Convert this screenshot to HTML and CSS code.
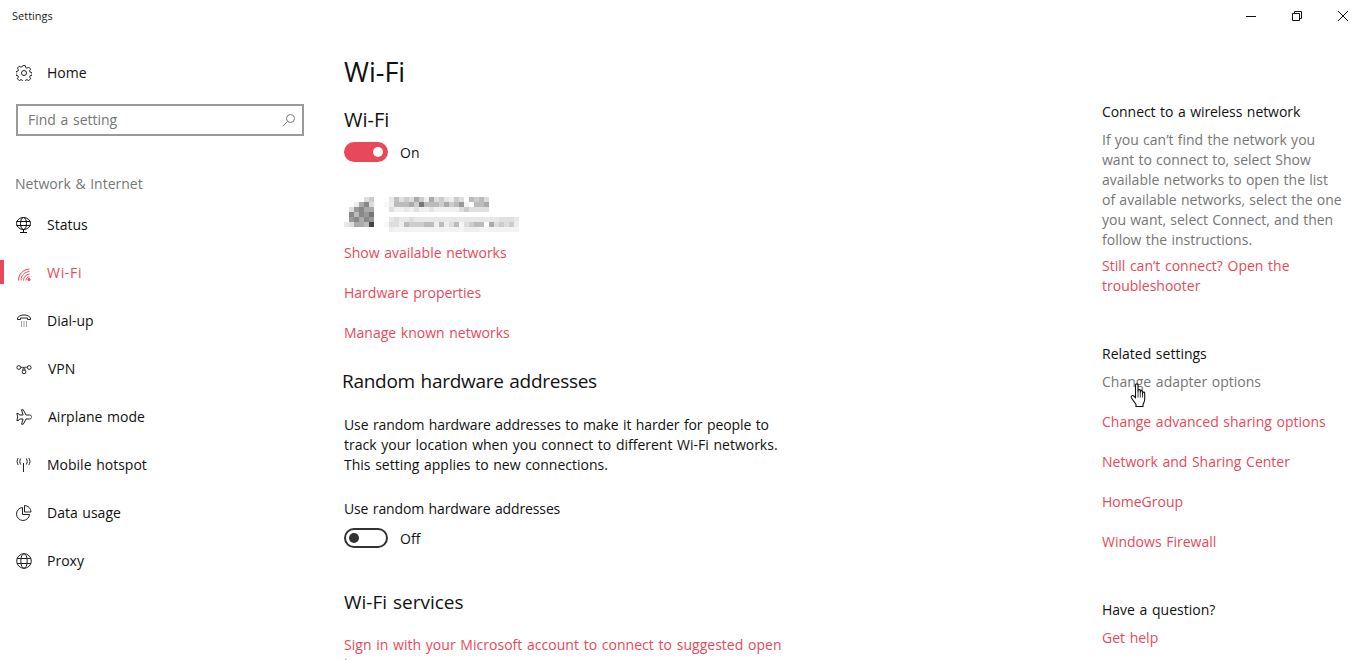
FILE: index.html
```html
<!DOCTYPE html>
<html lang="en">
<head>
<meta charset="utf-8">
<title>Settings</title>
<link rel="stylesheet" href="styles.css">
</head>
<body>
<div class="window">
  <header class="titlebar">
    <span class="app-name">Settings</span>
    <div class="controls">
      <span class="ctl"><svg width="10" height="10" viewBox="0 0 10 10"><path d="M0 5.500h10" stroke="#111" fill="none"/></svg></span>
      <span class="ctl"><svg width="10" height="10" viewBox="0 0 10 10"><path d="M.5 2.500h7v7h-7zM2.500 2.500v-2h7v7h-2" stroke="#111" fill="none"/></svg></span>
      <span class="ctl"><svg width="10" height="10" viewBox="0 0 10 10"><path d="M0 0l10 10M10 0L0 10" stroke="#111" fill="none"/></svg></span>
    </div>
  </header>
  <div class="columns">
    <nav class="sidebar">
      <a class="nav-item home">
        <svg class="ico" viewBox="0 0 16 16"><g fill="none" stroke="#222"><circle cx="8" cy="8" r="2.500"/><path d="M6.700.6h2.600l.4 2 1.300.6 1.800-1 1.800 1.900-1 1.700.5 1.300 2 .5v2.600l-2 .5-.5 1.300 1 1.700-1.800 1.900-1.800-1-1.300.6-.4 2H6.700l-.4-2-1.300-.6-1.800 1-1.800-1.900 1-1.700-.5-1.300-2-.5V6.600l2-.5.500-1.300-1-1.700 1.800-1.900 1.800 1 1.300-.6z"/></g></svg>
        <span>Home</span>
      </a>
      <div class="search">
        <span class="placeholder">Find a setting</span>
        <svg class="search-ico" width="14" height="14" viewBox="0 0 14 14"><circle cx="8.500" cy="5.500" r="4" fill="none" stroke="#777"/><path d="M5.600 8.400L.8 13.200" stroke="#777" fill="none"/></svg>
      </div>
      <div class="group-label">Network &amp; Internet</div>
      <a class="nav-item">
        <svg class="ico" viewBox="0 0 16 16"><g fill="none" stroke="#111"><ellipse cx="7.500" cy="6.500" rx="7" ry="6"/><ellipse cx="7.500" cy="6.500" rx="3" ry="6"/><path d="M.5 4.500h14M.5 8.500h14M7.500 12.500v3M4 15.500h7"/></g></svg>
        <span>Status</span>
      </a>
      <a class="nav-item active">
        <svg class="ico" viewBox="0 0 16 16"><g fill="none" stroke="#e8495a"><path d="M2.500 15.500C2.500 9 7 4.500 13.500 4M5 15.500c0-5 3.500-8.500 8.500-9M7.500 15.500c0-3.200 2.500-6 6-6.500M10 15.500c0-1.800 1.500-3.500 3.500-3.800"/></g><circle cx="13" cy="14.500" r="1.500" fill="#e8495a"/></svg>
        <span class="wide">Wi-Fi</span>
      </a>
      <a class="nav-item">
        <svg class="ico" viewBox="0 0 16 16"><path d="M1.500 6.500V5C2.500 3 5 2 8 2s5.500 1 6.500 3v1.500h-3V5h-7v1.500z" fill="none" stroke="#222"/><path d="M5 9h1M7.500 9h1M10 9h1M5 11h1M7.500 11h1M10 11h1M5 13h1M7.500 13h1M10 13h1" stroke="#555" fill="none"/></svg>
        <span>Dial-up</span>
      </a>
      <a class="nav-item">
        <svg class="ico" viewBox="0 0 16 16"><g fill="none" stroke="#222"><circle cx="2.800" cy="6.500" r="1.900"/><circle cx="13.200" cy="6.500" r="1.900"/><circle cx="8" cy="10.800" r="1.900"/><path d="M4.700 6.500C7 5.500 9.500 7 9 9.300M11.300 6.500C9 5.500 6 7 7 9.300"/></g></svg>
        <span class="shift">VPN</span>
      </a>
      <a class="nav-item">
        <svg class="ico" viewBox="0 0 16 16"><path d="M5.500.8h1.800L10 6h3.500c1.200 0 2.500 1 2.500 2s-1.300 2-2.500 2H10l-2.700 5.200H5.500L7.100 10H3.500l-1 1.500H.8L1.800 8 .8 4.500h1.700l1 1.500h3.600z" fill="none" stroke="#222"/></svg>
        <span class="shift">Airplane mode</span>
      </a>
      <a class="nav-item">
        <svg class="ico" viewBox="0 0 16 16"><g fill="none" stroke="#222"><path d="M7.500 6v9M4.700 1.500C3.500 3.500 3.500 5.500 4.700 7.500M2.200 1C.7 3.500.7 5.500 2.200 8M10.300 1.500c1.200 2 1.200 4 0 6M12.800 1c1.500 2.500 1.500 4.500 0 7"/></g></svg>
        <span>Mobile hotspot</span>
      </a>
      <a class="nav-item">
        <svg class="ico" viewBox="0 0 16 16"><g fill="none" stroke="#222"><path d="M6.500 2.500a6.500 6.500 0 1 0 7 7h-7z"/><path d="M8.500.5a6.500 6.500 0 0 1 6.500 6.500H8.500z"/></g></svg>
        <span>Data usage</span>
      </a>
      <a class="nav-item">
        <svg class="ico" viewBox="0 0 16 16"><g fill="none" stroke="#222"><circle cx="8" cy="8" r="7.300"/><ellipse cx="8" cy="8" rx="3.200" ry="7.300"/><path d="M1 5.500h14M1 10.500h14"/></g></svg>
        <span>Proxy</span>
      </a>
    </nav>
    <main class="content">
      <h1 class="page-title">Wi-Fi</h1>
      <h2 class="sub first">Wi-Fi</h2>
      <div class="toggle-row">
        <span class="toggle on"><span class="knob"></span></span>
        <span class="state">On</span>
      </div>
      <div class="network">
        <svg width="180" height="45" viewBox="0 0 180 45" shape-rendering="crispEdges">
          <g>
            <rect x="20" y="5" width="5" height="5" fill="#ddd"/><rect x="25" y="5" width="5" height="5" fill="#ccc"/>
            <rect x="10" y="10" width="5" height="5" fill="#eee"/><rect x="15" y="10" width="5" height="5" fill="#aaa"/><rect x="20" y="10" width="5" height="5" fill="#888"/><rect x="25" y="10" width="5" height="5" fill="#ddd"/>
            <rect x="5" y="15" width="5" height="5" fill="#ddd"/><rect x="10" y="15" width="5" height="5" fill="#999"/><rect x="15" y="15" width="5" height="5" fill="#888"/><rect x="20" y="15" width="5" height="5" fill="#aaa"/><rect x="25" y="15" width="5" height="5" fill="#aaa"/>
            <rect x="5" y="20" width="5" height="5" fill="#888"/><rect x="10" y="20" width="5" height="5" fill="#bbb"/><rect x="15" y="20" width="5" height="5" fill="#888"/><rect x="20" y="20" width="5" height="5" fill="#999"/><rect x="25" y="20" width="5" height="5" fill="#777"/>
            <rect x="5" y="25" width="5" height="5" fill="#999"/><rect x="10" y="25" width="5" height="5" fill="#888"/><rect x="15" y="25" width="5" height="5" fill="#aaa"/><rect x="20" y="25" width="5" height="5" fill="#888"/><rect x="25" y="25" width="5" height="5" fill="#999"/>
            <rect x="0" y="30" width="5" height="5" fill="#e8e8e8"/><rect x="5" y="30" width="5" height="5" fill="#ddd"/><rect x="10" y="30" width="10" height="5" fill="#aaa"/><rect x="20" y="30" width="5" height="5" fill="#bbb"/><rect x="25" y="30" width="5" height="5" fill="#444"/>
          </g>
          <g>
            <rect x="45" y="5" width="5" height="5" fill="#e8e8e8"/><rect x="50" y="5" width="5" height="5" fill="#c0c0c0"/><rect x="55" y="5" width="5" height="5" fill="#e0e0e0"/><rect x="60" y="5" width="5" height="5" fill="#ccc"/><rect x="65" y="5" width="5" height="5" fill="#ddd"/><rect x="70" y="5" width="5" height="5" fill="#aaa"/><rect x="75" y="5" width="5" height="5" fill="#ccc"/><rect x="80" y="5" width="5" height="5" fill="#eee"/><rect x="85" y="5" width="5" height="5" fill="#aaa"/><rect x="90" y="5" width="5" height="5" fill="#ddd"/><rect x="95" y="5" width="5" height="5" fill="#ccc"/><rect x="100" y="5" width="5" height="5" fill="#e5e5e5"/><rect x="105" y="5" width="5" height="5" fill="#eee"/><rect x="110" y="5" width="5" height="5" fill="#ccc"/><rect x="115" y="5" width="5" height="5" fill="#ddd"/><rect x="125" y="5" width="5" height="5" fill="#bbb"/><rect x="130" y="5" width="5" height="5" fill="#ccc"/><rect x="135" y="5" width="5" height="5" fill="#bbb"/><rect x="140" y="5" width="5" height="5" fill="#ddd"/>
            <rect x="40" y="10" width="5" height="5" fill="#f8f8f8"/><rect x="45" y="10" width="5" height="5" fill="#eee"/><rect x="50" y="10" width="15" height="5" fill="#bbb"/><rect x="65" y="10" width="5" height="5" fill="#aaa"/><rect x="70" y="10" width="5" height="5" fill="#ccc"/><rect x="75" y="10" width="5" height="5" fill="#777"/><rect x="80" y="10" width="15" height="5" fill="#bbb"/><rect x="95" y="10" width="5" height="5" fill="#ccc"/><rect x="100" y="10" width="5" height="5" fill="#aaa"/><rect x="105" y="10" width="5" height="5" fill="#ccc"/><rect x="110" y="10" width="5" height="5" fill="#bbb"/><rect x="115" y="10" width="5" height="5" fill="#999"/><rect x="120" y="10" width="5" height="5" fill="#f5f5f5"/><rect x="130" y="10" width="10" height="5" fill="#bbb"/><rect x="140" y="10" width="5" height="5" fill="#aaa"/>
            <rect x="45" y="15" width="5" height="5" fill="#ddd"/><rect x="50" y="15" width="65" height="5" fill="#f0f0f0"/><rect x="60" y="15" width="5" height="5" fill="#e8e8e8"/><rect x="70" y="15" width="5" height="5" fill="#e0e0e0"/><rect x="85" y="15" width="5" height="5" fill="#e5e5e5"/><rect x="115" y="15" width="5" height="5" fill="#ddd"/><rect x="120" y="15" width="5" height="5" fill="#ccc"/><rect x="125" y="15" width="20" height="5" fill="#e0e0e0"/>
            <rect x="45" y="25" width="130" height="5" fill="#e8e8e8"/><rect x="50" y="25" width="5" height="5" fill="#ddd"/><rect x="65" y="25" width="5" height="5" fill="#ddd"/><rect x="155" y="25" width="15" height="5" fill="#e0e0e0"/>
            <rect x="40" y="30" width="5" height="5" fill="#f8f8f8"/><rect x="45" y="30" width="10" height="5" fill="#ddd"/><rect x="55" y="30" width="5" height="5" fill="#eee"/><rect x="60" y="30" width="5" height="5" fill="#bbb"/><rect x="65" y="30" width="15" height="5" fill="#ccc"/><rect x="80" y="30" width="10" height="5" fill="#bbb"/><rect x="90" y="30" width="5" height="5" fill="#eee"/><rect x="95" y="30" width="5" height="5" fill="#bbb"/><rect x="100" y="30" width="5" height="5" fill="#eee"/><rect x="105" y="30" width="5" height="5" fill="#ddd"/><rect x="110" y="30" width="5" height="5" fill="#bbb"/><rect x="115" y="30" width="5" height="5" fill="#f5f5f5"/><rect x="120" y="30" width="5" height="5" fill="#ddd"/><rect x="125" y="30" width="5" height="5" fill="#ccc"/><rect x="130" y="30" width="10" height="5" fill="#bbb"/><rect x="145" y="30" width="5" height="5" fill="#aaa"/><rect x="150" y="30" width="5" height="5" fill="#ddd"/><rect x="155" y="30" width="5" height="5" fill="#ccc"/><rect x="160" y="30" width="5" height="5" fill="#ddd"/><rect x="165" y="30" width="5" height="5" fill="#ccc"/><rect x="170" y="30" width="5" height="5" fill="#eee"/>
            <rect x="45" y="35" width="130" height="5" fill="#f3f3f3"/><rect x="45" y="35" width="5" height="5" fill="#eee"/><rect x="120" y="35" width="15" height="5" fill="#eee"/>
          </g>
        </svg>
      </div>
      <ul class="links">
        <li><a>Show available networks</a></li>
        <li><a>Hardware properties</a></li>
        <li><a>Manage known networks</a></li>
      </ul>
      <h2 class="sub random">Random hardware addresses</h2>
      <p class="para"><span class="narrow-line">Use random hardware addresses to make it harder for people to</span><br>track your location when you connect to different Wi-Fi networks.<br>This setting applies to new connections.</p>
      <div class="opt-label">Use random hardware addresses</div>
      <div class="toggle-row">
        <span class="toggle off"><span class="knob"></span></span>
        <span class="state">Off</span>
      </div>
      <h2 class="sub services">Wi-Fi services</h2>
      <p class="signin"><a>Sign in with your Microsoft account to connect to suggested open hotspots</a></p>
    </main>
    <aside class="aside">
      <h3 class="side-title first">Connect to a wireless network</h3>
      <p class="side-text">If you can’t find the network you<br>want to connect to, select Show<br>available networks to open the list<br>of available networks, select the one<br>you want, select Connect, and then<br>follow the instructions.</p>
      <p class="side-link"><a>Still can’t connect? Open the troubleshooter</a></p>
      <h3 class="side-title related">Related settings</h3>
      <ul class="side-links">
        <li class="hover"><a>Change adapter options</a><svg class="cursor" width="18" height="26" viewBox="0 0 18 26"><path d="M5.500 2c0-1.500 2.500-1.500 2.500 0v7.500V7.500c0-1.200 2.300-1.200 2.300 0v2.500-1.500c0-1.200 2.200-1.200 2.200 0V11v-1c0-1.200 2.200-1.200 2.200 0v6c0 3-1.200 4-1.700 5.500v2H6v-2L1.500 15c-1-1.700.8-3.300 2.300-2l1.700 1.700z" fill="#fff" stroke="#111" stroke-width="1.100"/><path d="M8 9.500v5M10.300 10v4.500M12.500 11v3.500" stroke="#111" fill="none" stroke-width=".8"/></svg></li>
        <li><a>Change advanced sharing options</a></li>
        <li><a>Network and Sharing Center</a></li>
        <li><a>HomeGroup</a></li>
        <li><a>Windows Firewall</a></li>
      </ul>
      <h3 class="side-title question">Have a question?</h3>
      <p class="side-link tight"><a>Get help</a></p>
    </aside>
  </div>
</div>
</body>
</html>
```
FILE: styles.css
```css
* { box-sizing: border-box; }
html, body { margin: 0; padding: 0; height: 660px; overflow: hidden; background: #fff; }
body { font-family: "Open Sans", "Noto Sans", sans-serif; font-size: 14px; line-height: 20px; color: #111; word-spacing: 1px; }
a { color: #e8495a; text-decoration: none; }
h1, h2, h3, p, ul { margin: 0; padding: 0; font-weight: 400; }
ul { list-style: none; }
.window { width: 1362px; height: 660px; overflow: hidden; display: flex; flex-direction: column; }
.titlebar { height: 32px; flex: none; display: flex; align-items: center; justify-content: space-between; padding-left: 12px; }
.app-name { font-size: 11px; color: #222; }
.controls { display: flex; margin-right: -4px; }
.ctl { width: 46px; height: 32px; display: flex; align-items: center; justify-content: center; }
.columns { display: flex; flex: 1; min-height: 0; }
.sidebar { width: 344px; flex: none; padding-top: 17px; }
.nav-item { display: flex; align-items: center; height: 48px; color: #111; padding-left: 16px; gap: 15px; position: relative; }
.nav-item .ico { width: 16px; height: 16px; flex: none; }
.nav-item .shift { margin-left: 1px; }
.nav-item .wide { letter-spacing: .7px; }
.nav-item.active { color: #e8495a; }
.nav-item.active::before { content: ""; position: absolute; left: 0; top: 11px; width: 4px; height: 24px; background: #e8495a; }
.search { margin: 7px 0 0 16px; width: 288px; height: 32px; border: 2px solid #999; display: flex; align-items: center; justify-content: space-between; padding: 0 6px 0 10px; color: #767676; }
.group-label { margin: 38px 0 7px 15px; height: 20px; color: #767676; }
.content { width: 758px; flex: none; padding-top: 24px; }
.page-title { font-size: 27px; line-height: 32px; }
.sub { font-size: 19px; line-height: 28px; }
.sub.first { margin-top: 18px; font-size: 20px; }
.toggle-row { display: flex; align-items: center; gap: 12px; height: 20px; margin-top: 8px; }
.state { padding-top: 2px; }
.toggle { width: 44px; height: 20px; border-radius: 10px; position: relative; display: block; }
.toggle.on { background: #e8495a; }
.toggle.off { border: 2px solid #333; }
.knob { position: absolute; width: 10px; height: 10px; border-radius: 50%; top: 5px; }
.on .knob { background: #fff; right: 5px; }
.off .knob { background: #333; left: 3px; top: 3px; }
.network { margin-top: 30px; height: 45px; }
.network svg { display: block; }
.links { margin-top: 6px; }
.links li { height: 20px; margin-bottom: 20px; }
.sub.random { margin: 24px 0 0 -2px; letter-spacing: -0.28px; }
.para { margin-top: 20px; }
.narrow-line { letter-spacing: -0.11px; }
.opt-label { margin-top: 24px; letter-spacing: -0.13px; }
.opt-label + .toggle-row { margin-top: 9px; }
.sub.services { margin-top: 40px; }
.signin { margin-top: 19px; width: 445px; letter-spacing: .03px; }
.aside { width: 260px; flex: none; padding-top: 70px; }
.side-title { font-size: 14px; line-height: 20px; }
.side-title.first { letter-spacing: -0.07px; }
.side-text { margin-top: 8px; color: #767676; word-spacing: .6px; }
.side-link { margin-top: 6px; }
.side-link.tight { margin-top: 8px; }
.side-title.related { margin-top: 48px; }
.side-links { margin-top: 8px; }
.side-links li { height: 20px; margin-bottom: 20px; }
.side-links .hover { position: relative; }
.side-links .hover a { color: #767676; }
.cursor { position: absolute; left: 28px; top: 11px; }
.side-title.question { margin-top: 48px; }
```
